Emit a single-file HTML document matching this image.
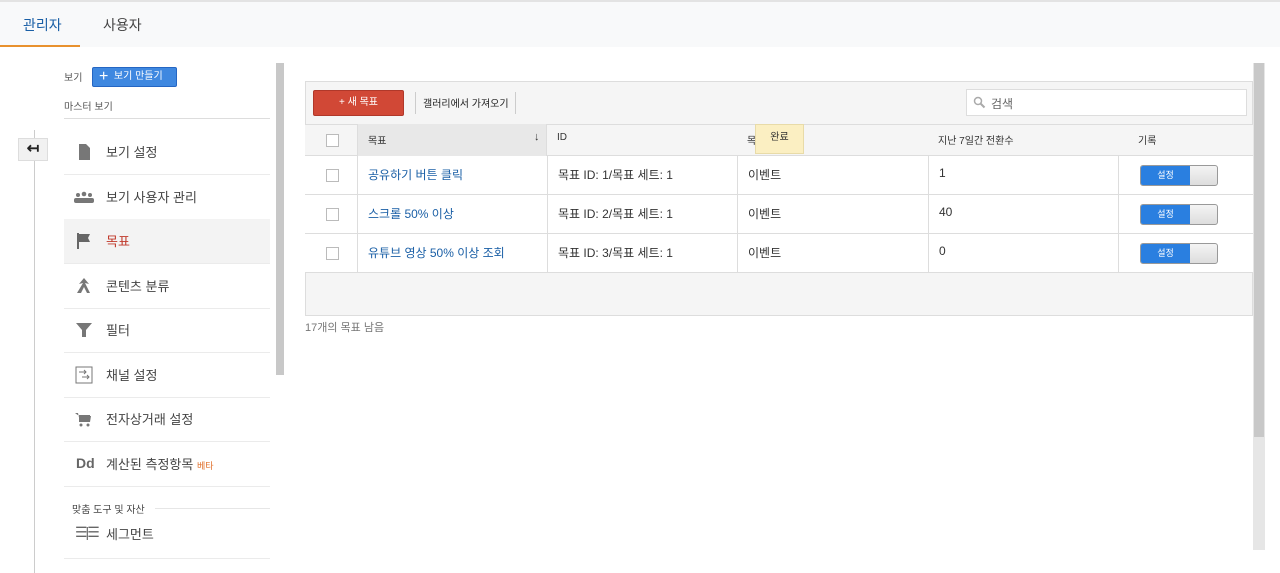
<!DOCTYPE html>
<html><head><meta charset="utf-8"><style>
*{box-sizing:border-box;margin:0;padding:0}
body{width:1280px;height:573px;background:#fff;font-family:"Liberation Sans","Noto Sans CJK KR",sans-serif;position:relative;overflow:hidden;color:#333}
.a{position:absolute}
.top{left:0;top:0;width:1280px;height:47px;background:#f8f9fa;border-top:2px solid #e3e3e3}
.tab{top:15px;font-size:14px}
.side-item{left:64px;width:206px;height:45px;border-bottom:1px solid #ebebeb;font-size:13px;color:#444}
.side-item span.t{position:absolute;left:42px;top:12px}
.side-item .ic{position:absolute;left:10px;top:12px;width:20px;height:20px}
.row{left:305px;width:948px;height:39px;background:#fff;border-bottom:1px solid #ddd}
.cell{position:absolute;top:0;height:39px;border-left:1px solid #ddd;font-size:12px;padding:10px 0 0 10px}
.cb{position:absolute;width:13px;height:13px;border:1px solid #bbb;background:#fff;left:21px}
.tog{position:absolute;left:21px;top:9px;width:78px;height:21px;border:1px solid #999;border-radius:3px;background:linear-gradient(#f4f4f4,#ddd)}
.tog b{position:absolute;left:0;top:0;width:49px;height:19px;background:#2a7fe0;border-radius:2px 0 0 2px;color:#fff;font-size:9px;font-weight:normal;text-align:center;line-height:19px}
</style></head><body>
<div class="a top"></div>
<div class="a tab" style="left:23px;color:#1a5fa6">관리자</div>
<div class="a tab" style="left:103px;color:#444">사용자</div>
<div class="a" style="left:0;top:45px;width:80px;height:2px;background:#e8912e"></div>

<div class="a" style="left:34px;top:130px;width:1px;height:443px;background:#ccc"></div>
<div class="a" style="left:18px;top:138px;width:30px;height:23px;background:#f1f1f1;border:1px solid #ddd;font-size:15px;font-weight:bold;text-align:center;line-height:20px;color:#222">↤</div>

<div class="a" style="left:64px;top:69px;font-size:10px;color:#555">보기</div>
<div class="a" style="left:92px;top:67px;width:85px;height:20px;background:#3f88e0;border:1px solid #2566c3;border-radius:2px;color:#fff;font-size:10px;line-height:18px;padding-left:6px"><span style="font-size:16px;vertical-align:-2px">+</span>&nbsp; 보기 만들기</div>
<div class="a" style="left:64px;top:98px;font-size:10px;color:#555">마스터 보기</div>
<div class="a" style="left:64px;top:118px;width:206px;height:1px;background:#ddd"></div>

<div class="a side-item" style="top:130px"><svg class="ic" viewBox="0 0 20 20"><path d="M5 2h7l4 4v12H5z" fill="#777"/></svg><span class="t">보기 설정</span></div>
<div class="a side-item" style="top:175px"><svg class="ic" viewBox="0 0 20 20"><circle cx="4" cy="8" r="2" fill="#777"/><circle cx="10" cy="7" r="2.3" fill="#777"/><circle cx="16" cy="8" r="2" fill="#777"/><rect x="0" y="11" width="20" height="5" rx="2" fill="#777"/></svg><span class="t">보기 사용자 관리</span></div>
<div class="a side-item" style="top:219px;background:#f3f3f3"><svg class="ic" viewBox="0 0 20 20"><path d="M3 2h2v16H3zM5 3h11l-2 4 2 4H5z" fill="#666"/></svg><span class="t" style="color:#c0392b">목표</span></div>
<div class="a side-item" style="top:264px"><svg class="ic" viewBox="0 0 20 20"><path d="M3 17l6-10-4 1 5-6 5 6-4-1 5 10h-3l-3-6-3 6z" fill="#777"/></svg><span class="t">콘텐츠 분류</span></div>
<div class="a side-item" style="top:308px"><svg class="ic" viewBox="0 0 20 20"><path d="M2 3h16l-6 7v7h-4v-7z" fill="#777"/></svg><span class="t">필터</span></div>
<div class="a side-item" style="top:353px"><svg class="ic" viewBox="0 0 20 20"><rect x="2" y="2" width="16" height="16" fill="none" stroke="#777"/><path d="M5 7h7M10 5l2 2-2 2M8 12h7M13 10l2 2-2 2" stroke="#777" fill="none"/></svg><span class="t">채널 설정</span></div>
<div class="a side-item" style="top:397px"><svg class="ic" viewBox="0 0 20 20"><path d="M1 4h3l2 9h10l1-6H5" fill="#777"/><rect x="5" y="6" width="11" height="7" fill="#777"/><circle cx="7" cy="16" r="1.5" fill="#777"/><circle cx="14" cy="16" r="1.5" fill="#777"/></svg><span class="t">전자상거래 설정</span></div>
<div class="a side-item" style="top:442px"><span style="position:absolute;left:12px;top:13px;font-weight:bold;color:#666;font-size:14px">Dd</span><span class="t">계산된 측정항목 <span style="font-size:9px;color:#e0702b">베타</span></span></div>
<div class="a" style="left:72px;top:501px;font-size:10px;color:#444">맞춤 도구 및 자산</div>
<div class="a" style="left:155px;top:508px;width:115px;height:1px;background:#e6e6e6"></div>
<div class="a side-item" style="top:514px"><span style="position:absolute;left:11px;top:10px;font-size:14px;color:#666;letter-spacing:-2px">☰|☰</span><span class="t" style="top:10px">세그먼트</span></div>

<div class="a" style="left:276px;top:63px;width:8px;height:312px;background:#c8c8c8"></div>

<div class="a" style="left:305px;top:81px;width:948px;height:235px;background:#f5f5f5;border:1px solid #ddd"></div>
<div class="a" style="left:313px;top:90px;width:91px;height:26px;background:#d14836;border:1px solid #b0382a;border-radius:2px;color:#fff;font-size:10px;text-align:center;line-height:24px">+ 새 목표</div>
<div class="a" style="left:415px;top:92px;width:1px;height:22px;background:#ccc"></div>
<div class="a" style="left:423px;top:95px;font-size:10px;color:#222">갤러리에서 가져오기</div>
<div class="a" style="left:515px;top:92px;width:1px;height:22px;background:#ccc"></div>
<div class="a" style="left:966px;top:89px;width:281px;height:27px;background:#fff;border:1px solid #ddd;font-size:12px;color:#666;padding:5px 0 0 24px">검색</div>
<svg class="a" style="left:973px;top:96px" width="13" height="13" viewBox="0 0 13 13"><circle cx="5" cy="5" r="3.5" fill="none" stroke="#aaa" stroke-width="1.5"/><path d="M7.5 7.5l4 4" stroke="#aaa" stroke-width="2"/></svg>

<div class="a" style="left:305px;top:124px;width:948px;height:32px;border-top:1px solid #ddd;border-bottom:1px solid #ddd;background:#f5f5f5"></div>
<div class="a" style="left:357px;top:124px;width:190px;height:32px;background:#e8e8e8;border-left:1px solid #ddd;border-right:1px solid #ddd"></div>
<div class="a cb" style="left:326px;top:134px"></div>
<div class="a" style="left:368px;top:132px;font-size:10px">목표</div>
<div class="a" style="left:534px;top:131px;font-size:11px;font-weight:bold">↓</div>
<div class="a" style="left:557px;top:132px;font-size:10px">ID</div>
<div class="a" style="left:747px;top:132px;font-size:10px">목</div>
<div class="a" style="left:938px;top:132px;font-size:10px">지난 7일간 전환수</div>
<div class="a" style="left:1138px;top:132px;font-size:10px">기록</div>
<div class="a" style="left:755px;top:124px;width:49px;height:30px;background:#fbefc2;border:1px solid #e8dba8;font-size:10px;text-align:center;line-height:26px">완료</div>

<div class="a row" style="top:156px"><div class="cb" style="top:13px"></div><div class="cell" style="left:52px;width:190px;color:#1a5fa6">공유하기 버튼 클릭</div><div class="cell" style="left:242px;width:190px">목표 ID: 1/목표 세트: 1</div><div class="cell" style="left:432px;width:191px">이벤트</div><div class="cell" style="left:623px;width:190px">1</div><div class="cell" style="left:813px;width:135px;padding:0"><div class="tog"><b>설정</b></div></div></div>
<div class="a row" style="top:195px"><div class="cb" style="top:13px"></div><div class="cell" style="left:52px;width:190px;color:#1a5fa6">스크롤 50% 이상</div><div class="cell" style="left:242px;width:190px">목표 ID: 2/목표 세트: 1</div><div class="cell" style="left:432px;width:191px">이벤트</div><div class="cell" style="left:623px;width:190px">40</div><div class="cell" style="left:813px;width:135px;padding:0"><div class="tog"><b>설정</b></div></div></div>
<div class="a row" style="top:234px"><div class="cb" style="top:13px"></div><div class="cell" style="left:52px;width:190px;color:#1a5fa6">유튜브 영상 50% 이상 조회</div><div class="cell" style="left:242px;width:190px">목표 ID: 3/목표 세트: 1</div><div class="cell" style="left:432px;width:191px">이벤트</div><div class="cell" style="left:623px;width:190px">0</div><div class="cell" style="left:813px;width:135px;padding:0"><div class="tog"><b>설정</b></div></div></div>

<div class="a" style="left:305px;top:319px;font-size:11px;color:#777">17개의 목표 남음</div>
<div class="a" style="left:1253px;top:63px;width:12px;height:487px;background:#e6e6e6"></div>
<div class="a" style="left:1254px;top:63px;width:10px;height:374px;background:#c8c8c8"></div>
</body></html>
